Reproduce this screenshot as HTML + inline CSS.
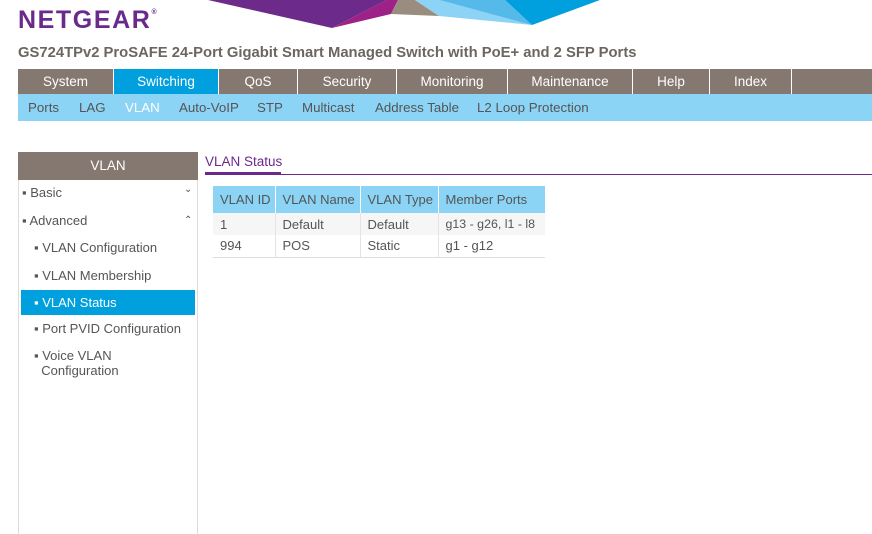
<!DOCTYPE html>
<html><head><meta charset="utf-8"><style>
*{margin:0;padding:0;box-sizing:border-box}
body{width:872px;height:534px;overflow:hidden;background:#fff;font-family:"Liberation Sans",Arial,sans-serif;font-size:13px;color:#444;position:relative;white-space:nowrap}
.abs{position:absolute}
.logo{left:18px;top:6px;font-size:25px;font-weight:bold;color:#6a2a8c;letter-spacing:1.6px}
.logo sup{font-size:7px;vertical-align:top;position:relative;top:3px;letter-spacing:0}
.title{left:18px;top:45px;font-size:14.8px;font-weight:bold;color:#6b6660}
.nav{left:18px;top:69px;width:854px;height:25px;background:#847870}
.nav div{position:absolute;top:0;height:25px;line-height:25px;text-align:center;color:#fff;font-size:13.5px;border-right:1px solid #fff}
.sub{left:18px;top:94px;width:854px;height:27px;background:#8bd4f5}
.sub span{position:absolute;top:0;line-height:27px;font-size:13.3px;color:#555}
.side{left:18px;top:152px;width:180px;height:382px;border-left:1px solid #ddd;border-right:1px solid #ddd}
.sh{left:18px;top:152px;width:180px;height:28px;background:#847870;color:#fff;text-align:center;line-height:28px;font-size:13.5px}
.si{position:absolute;font-size:13px;color:#555}
.sel{left:21px;top:290px;width:174px;height:25px;background:#00a0de}
table{position:absolute;left:213px;top:186px;border-collapse:collapse;font-size:13px;table-layout:fixed;width:332px}
th{background:#8bd4f5;font-weight:normal;color:#555;height:27px;text-align:left;padding:0 0 0 7px;border-right:1px solid #fff;overflow:hidden}
td{height:22px;padding:0 0 0 7px;color:#555;border-right:1px solid #e4e4e4;overflow:hidden}
tr.r1 td{background:#f6f6f6}
tr.r2 td{border-bottom:1px solid #ddd}
</style></head><body>
<svg class="abs" style="left:0;top:0" width="872" height="40">
<polygon points="208,0 332,28 387,0" fill="#6c2a8a"/>
<polygon points="332,28 391,14 398,0 387,0" fill="#9e2188"/>
<polygon points="391,14 398,0 415,0 439,16" fill="#9b8c80"/>
<polygon points="415,0 439,16 532,25 470,0" fill="#8cd3f5"/>
<polygon points="440,0 532,25 505,0" fill="#55b9e9"/>
<polygon points="505,0 532,25 600,0" fill="#009fdd"/>
</svg>
<div class="abs logo">NETGEAR<sup>®</sup></div>
<div class="abs title">GS724TPv2 ProSAFE 24-Port Gigabit Smart Managed Switch with PoE+ and 2 SFP Ports</div>
<div class="abs nav">
<div style="left:0;width:96px">System</div>
<div style="left:96px;width:105px;background:#00a0de">Switching</div>
<div style="left:201px;width:79px">QoS</div>
<div style="left:280px;width:99px">Security</div>
<div style="left:379px;width:111px">Monitoring</div>
<div style="left:490px;width:125px">Maintenance</div>
<div style="left:615px;width:77px">Help</div>
<div style="left:692px;width:82px">Index</div>
</div>
<div class="abs sub">
<span style="left:10px">Ports</span><span style="left:61px">LAG</span><span style="left:107px;color:#fff">VLAN</span><span style="left:161px">Auto-VoIP</span><span style="left:239px">STP</span><span style="left:284px">Multicast</span><span style="left:357px">Address Table</span><span style="left:459px">L2 Loop Protection</span>
</div>
<div class="abs side"></div>
<div class="abs sh">VLAN</div>
<div class="si" style="left:22px;top:185px">▪ Basic</div><div class="si" style="left:184px;top:184px;font-size:10px">⌄</div>
<div class="si" style="left:22px;top:213px">▪ Advanced</div><div class="si" style="left:184px;top:215px;font-size:10px">⌃</div>
<div class="si" style="left:34px;top:240px">▪ VLAN Configuration</div>
<div class="si" style="left:34px;top:268px">▪ VLAN Membership</div>
<div class="abs sel"></div>
<div class="si" style="left:34px;top:295px;color:#fff">▪ VLAN Status</div>
<div class="si" style="left:34px;top:321px">▪ Port PVID Configuration</div>
<div class="si" style="left:34px;top:348px;line-height:15px">▪ Voice VLAN<br>&nbsp;&nbsp;Configuration</div>
<div class="abs" style="left:205px;top:154px;font-size:13.5px;color:#6a2a8c">VLAN Status</div>
<div class="abs" style="left:205px;top:174px;width:667px;height:1px;background:#6a2a8c"></div>
<div class="abs" style="left:205px;top:172px;width:76px;height:3px;background:#6a2a8c"></div>
<table>
<colgroup><col style="width:62px"><col style="width:85px"><col style="width:78px"><col style="width:107px"></colgroup>
<tr><th>VLAN ID</th><th>VLAN Name</th><th>VLAN Type</th><th style="border-right:0">Member Ports</th></tr>
<tr class="r1"><td>1</td><td>Default</td><td>Default</td><td style="border-right:0;font-size:12.4px">g13 - g26, l1 - l8</td></tr>
<tr class="r2"><td>994</td><td>POS</td><td>Static</td><td style="border-right:0">g1 - g12</td></tr>
</table>
</body></html>
